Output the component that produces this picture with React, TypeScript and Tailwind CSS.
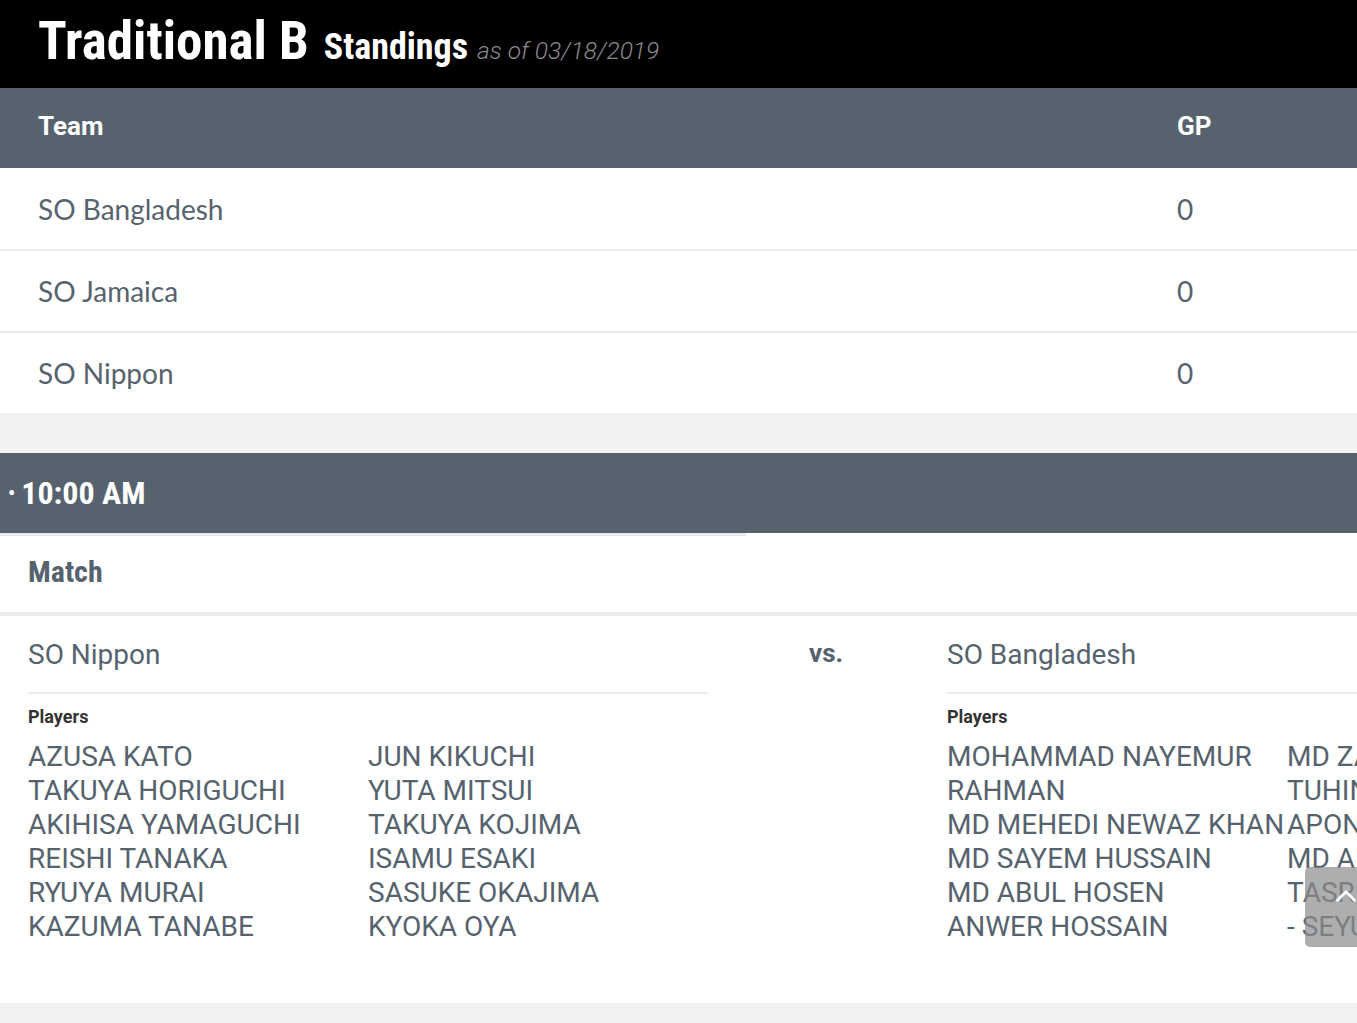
import { ChevronUp } from "lucide-react";

const standings = [
  { team: "SO Bangladesh", gp: 0 },
  { team: "SO Jamaica", gp: 0 },
  { team: "SO Nippon", gp: 0 },
];

const nipponPlayers = [
  ["AZUSA KATO", "TAKUYA HORIGUCHI", "AKIHISA YAMAGUCHI", "REISHI TANAKA", "RYUYA MURAI", "KAZUMA TANABE"],
  ["JUN KIKUCHI", "YUTA MITSUI", "TAKUYA KOJIMA", "ISAMU ESAKI", "SASUKE OKAJIMA", "KYOKA OYA"],
];

const bangladeshPlayers = [
  ["MOHAMMAD NAYEMUR RAHMAN", "MD MEHEDI NEWAZ KHAN", "MD SAYEM HUSSAIN", "MD ABUL HOSEN", "ANWER HOSSAIN"],
  ["MD ZAKIR HOSSAIN", "TUHIN MIA", "APON SARKER", "MD AMINUL ISLAM", "TASRIF AHMED", "- SEYUM"],
];

function PlayerList({ cols }: { cols: string[][] }) {
  return (
    <div className="flex">
      {cols.map((col, i) => (
        <ul key={i} className="w-[340px] shrink-0">
          {col.map((p) => (
            <li key={p} className="text-[28px] leading-[34px] text-[#56636e]">
              {p}
            </li>
          ))}
        </ul>
      ))}
    </div>
  );
}

function TeamBlock({ name, cols, lineWidth }: { name: string; cols: string[][]; lineWidth: string }) {
  return (
    <div>
      <div className={"h-[78px] pt-[1px] flex items-center border-b-2 border-[#ececec] " + lineWidth}>
        <span className="text-[28px] text-[#56636e]">{name}</span>
      </div>
      <div className="pt-[9px] text-[18px] font-bold text-[#333]">Players</div>
      <div className="pt-[10px]">
        <PlayerList cols={cols} />
      </div>
    </div>
  );
}

export default function App() {
  return (
    <div className="relative w-[1357px] h-[1023px] overflow-hidden bg-[#f2f2f2] font-['Roboto',sans-serif]">
      {/* page title */}
      <div className="h-[88px] bg-black flex items-end pb-[20px] pl-[38px]">
        <div className="flex items-baseline">
          <h1 className="text-[53px] leading-none font-bold font-stretch-condensed text-white">Traditional B</h1>
          <span className="ml-[15px] text-[36px] leading-none font-bold font-stretch-condensed text-white">
            Standings
          </span>
          <span className="ml-[9px] text-[24.5px] leading-none italic font-light text-[#8a8a8a]">
            as of 03/18/2019
          </span>
        </div>
      </div>

      {/* standings table */}
      <table className="w-full border-collapse">
        <thead>
          <tr className="bg-[#56636e] h-[80px] text-white text-[26px] font-bold">
            <th className="text-left pl-[38px] pb-[4px]">Team</th>
            <th className="text-left w-[180px] pb-[4px]">GP</th>
          </tr>
        </thead>
        <tbody className="font-['Lato',sans-serif] text-[28px] text-[#56636e]">
          {standings.map((s, i) => (
            <tr
              key={s.team}
              className={
                "bg-white " + (i < standings.length - 1 ? "h-[82px] border-b-2 border-[#ececec]" : "h-[81px]")
              }
            >
              <td className="pl-[38px]">{s.team}</td>
              <td>{s.gp}</td>
            </tr>
          ))}
        </tbody>
      </table>

      <div className="h-[40px]" />

      {/* schedule */}
      <div className="h-[80px] bg-[#56636e] flex items-center pl-[8px] text-white text-[32px] font-bold font-stretch-condensed">
        <span className="text-[20px] mr-[6px]">•</span>10:00 AM
      </div>
      <div className="bg-white">
        <div className="flex">
          <div className="w-[746px] h-[3px] bg-[#e6e9ec]" />
        </div>
        <div className="h-[80px] pb-[6px] flex items-center pl-[28px] text-[30px] font-bold font-stretch-condensed text-[#56636e] border-b-4 border-[#ececec]">
          Match
        </div>
        <div className="flex h-[387px]">
          <div className="w-[746px] shrink-0 pl-[28px]">
            <TeamBlock name="SO Nippon" cols={nipponPlayers} lineWidth="w-[680px]" />
          </div>
          <div className="w-[201px] shrink-0 pl-[63px]">
            <div className="h-[74px] flex items-center text-[26px] font-bold text-[#56636e]">vs.</div>
          </div>
          <div className="shrink-0 w-[800px]">
            <TeamBlock name="SO Bangladesh" cols={bangladeshPlayers} lineWidth="w-full" />
          </div>
        </div>
      </div>

      {/* back to top */}
      <button className="absolute left-[1305px] top-[867px] w-[80px] h-[80px] rounded-[5px] bg-[#8c8c8c]/70 flex items-start justify-start pl-[24px] pt-[12px]">
        <ChevronUp className="text-white w-[34px] h-[34px]" strokeWidth={2} />
      </button>
    </div>
  );
}
